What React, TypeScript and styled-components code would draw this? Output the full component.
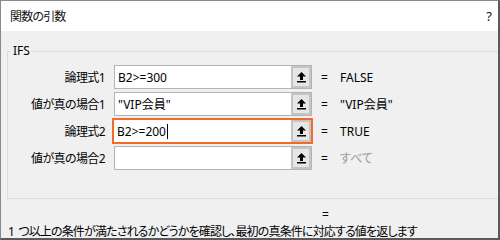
import React from 'react'
import styled, { createGlobalStyle } from 'styled-components'

const GlobalStyle = createGlobalStyle`
  html, body {
    margin: 0;
    padding: 0;
    background: #ffffff;
  }
  body {
    font-family: "Noto Sans", "Noto Sans CJK JP", sans-serif;
    font-feature-settings: "palt";
    font-size: 12px;
    color: #000;
  }
`

type Arg = {
  label: string
  value: string
  result: string
  active?: boolean
  muted?: boolean
}

const args: Arg[] = [
  { label: '論理式1', value: 'B2>=300', result: 'FALSE' },
  { label: '値が真の場合1', value: '"VIP会員"', result: '"VIP会員"' },
  { label: '論理式2', value: 'B2>=200', result: 'TRUE', active: true },
  { label: '値が真の場合2', value: '', result: 'すべて', muted: true },
]

const RefIcon = () => (
  <svg width='9' height='11' viewBox='0 0 9 11'>
    <path d='M4.5 0 L9 4.5 H6 V8 H3 V4.5 H0 Z' fill='#000' />
    <rect x='0' y='9' width='9' height='1.5' fill='#000' />
  </svg>
)

export const App = () => {
  return (
    <>
      <GlobalStyle />
      <Window>
        <TitleBar>
          <Title>関数の引数</Title>
          <Help>?</Help>
        </TitleBar>
        <Body>
          <Group>
            <Legend>IFS</Legend>
            <Rows>
              {args.map((a) => (
                <React.Fragment key={a.label}>
                  <Label>{a.label}</Label>
                  <Field $active={a.active}>
                    <FieldText>
                      {a.value}
                      {a.active && <Caret />}
                    </FieldText>
                    <RefButton>
                      <RefIcon />
                    </RefButton>
                  </Field>
                  <Equals>=</Equals>
                  <Result $muted={a.muted}>{a.result}</Result>
                </React.Fragment>
              ))}
            </Rows>
          </Group>
          <Total>=</Total>
          <Description>1 つ以上の条件が満たされるかどうかを確認し、最初の真条件に対応する値を返します</Description>
        </Body>
      </Window>
    </>
  )
}

const Window = styled.div`
  width: 500px;
  height: 240px;
  box-sizing: border-box;
  display: flex;
  flex-direction: column;
  border-top: 1px solid #8a8a8a;
  border-left: 1px solid #8a8a8a;
  border-right: 2px solid #5a5a5a;
  border-bottom: 2px solid #5a5a5a;
  overflow: hidden;
`

const TitleBar = styled.div`
  height: 30px;
  flex: none;
  display: flex;
  align-items: center;
  justify-content: space-between;
  padding: 0 6px 0 9px;
  background: #fff;
  font-size: 12px;
  color: #111;
`

const Title = styled.span`
  letter-spacing: -0.8px;
`

const Help = styled.span`
  font-size: 13px;
`

const Body = styled.div`
  flex: 1;
  background: #f0f0f0;
  display: flex;
  flex-direction: column;
  padding: 14px 0 0 6px;
`

const Group = styled.fieldset`
  margin: 0;
  padding: 8px 0 31px 0;
  height: 154px;
  box-sizing: border-box;
  border: 1px solid #dcdcdc;
  border-right: none;
`

const Legend = styled.legend`
  padding: 0 2px;
  margin-left: 3px;
  font-size: 12px;
  line-height: 12px;
`

const Rows = styled.div`
  display: grid;
  grid-template-columns: 97px 198px 10px 1fr;
  grid-auto-rows: 24px;
  row-gap: 3px;
  column-gap: 9px;
  align-items: center;
`

const Label = styled.div`
  text-align: right;
  white-space: nowrap;
  letter-spacing: -0.6px;
`

const Field = styled.div<{ $active?: boolean }>`
  align-self: stretch;
  box-sizing: border-box;
  display: flex;
  background: #fff;
  border: ${(p) => (p.$active ? '2px solid #f26a2c' : '1px solid #b4b4b4')};
  margin: ${(p) => (p.$active ? '-1px -1px -1px -2px' : '0')};
`

const FieldText = styled.div`
  flex: 1;
  display: flex;
  align-items: center;
  padding-left: 3px;
  white-space: nowrap;
`

const Caret = styled.span`
  display: inline-block;
  width: 1px;
  height: 15px;
  background: #000;
  margin-left: 1px;
`

const RefButton = styled.div`
  width: 20px;
  flex: none;
  box-sizing: border-box;
  display: flex;
  align-items: center;
  justify-content: center;
  background: #e6e6e6;
  border: 2px solid #c4c4c4;
`

const Equals = styled.div`
  text-align: left;
`

const Result = styled.div<{ $muted?: boolean }>`
  color: ${(p) => (p.$muted ? '#9a9a9a' : '#000')};
  white-space: nowrap;
`

const Total = styled.div`
  margin: 9px 0 0 315px;
  height: 14px;
  line-height: 14px;
`

const Description = styled.div`
  margin-top: 0;
  padding-left: 1px;
  white-space: nowrap;
  letter-spacing: -0.85px;
  word-spacing: 2px;
`

export default App
